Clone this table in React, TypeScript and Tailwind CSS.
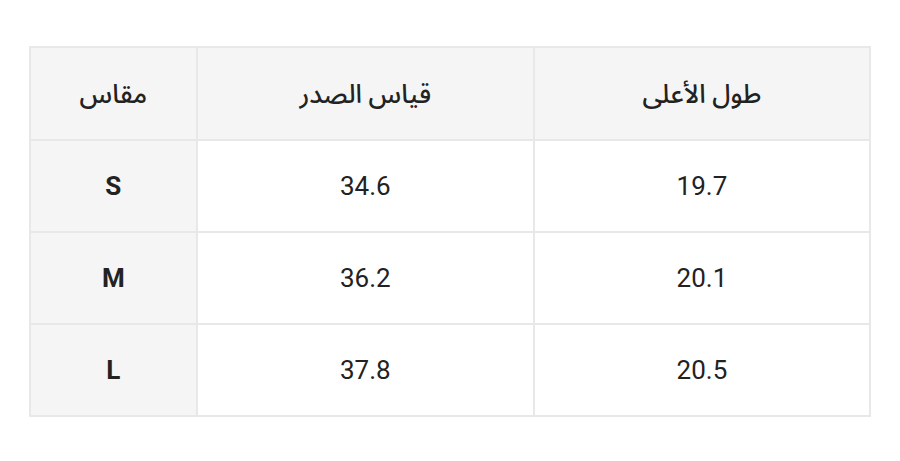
import React from "react";

const rows = [
  { size: "S", chest: "34.6", len: "19.7" },
  { size: "M", chest: "36.2", len: "20.1" },
  { size: "L", chest: "37.8", len: "20.5" },
];

export default function App() {
  return (
    <div
      className="w-[900px] h-[461px] bg-white pt-[46px] pl-[29px]"
      style={{ fontFamily: 'Roboto, "Noto Sans Arabic", "Noto Sans", "DejaVu Sans", sans-serif' }}
    >
      <table className="w-[842px] border-collapse border-2 border-[#e8e8e8] text-[#222] text-[26px]">
        <colgroup>
          <col className="w-[167px]" />
          <col className="w-[338px]" />
          <col className="w-[337px]" />
        </colgroup>
        <thead>
          <tr className="h-[93px] bg-[#f5f5f5]">
            <th className="border-2 border-[#e8e8e8] font-medium pt-[2px]" dir="rtl">مقاس</th>
            <th className="border-2 border-[#e8e8e8] font-medium pt-[2px]" dir="rtl">قياس الصدر</th>
            <th className="border-2 border-[#e8e8e8] font-medium pt-[2px]" dir="rtl">طول الأعلى</th>
          </tr>
        </thead>
        <tbody>
          {rows.map((r) => (
            <tr key={r.size} className="h-[92px]">
              <td className="border-2 border-[#e8e8e8] bg-[#f5f5f5] text-center font-bold">{r.size}</td>
              <td className="border-2 border-[#e8e8e8] text-center">{r.chest}</td>
              <td className="border-2 border-[#e8e8e8] text-center">{r.len}</td>
            </tr>
          ))}
        </tbody>
      </table>
    </div>
  );
}
